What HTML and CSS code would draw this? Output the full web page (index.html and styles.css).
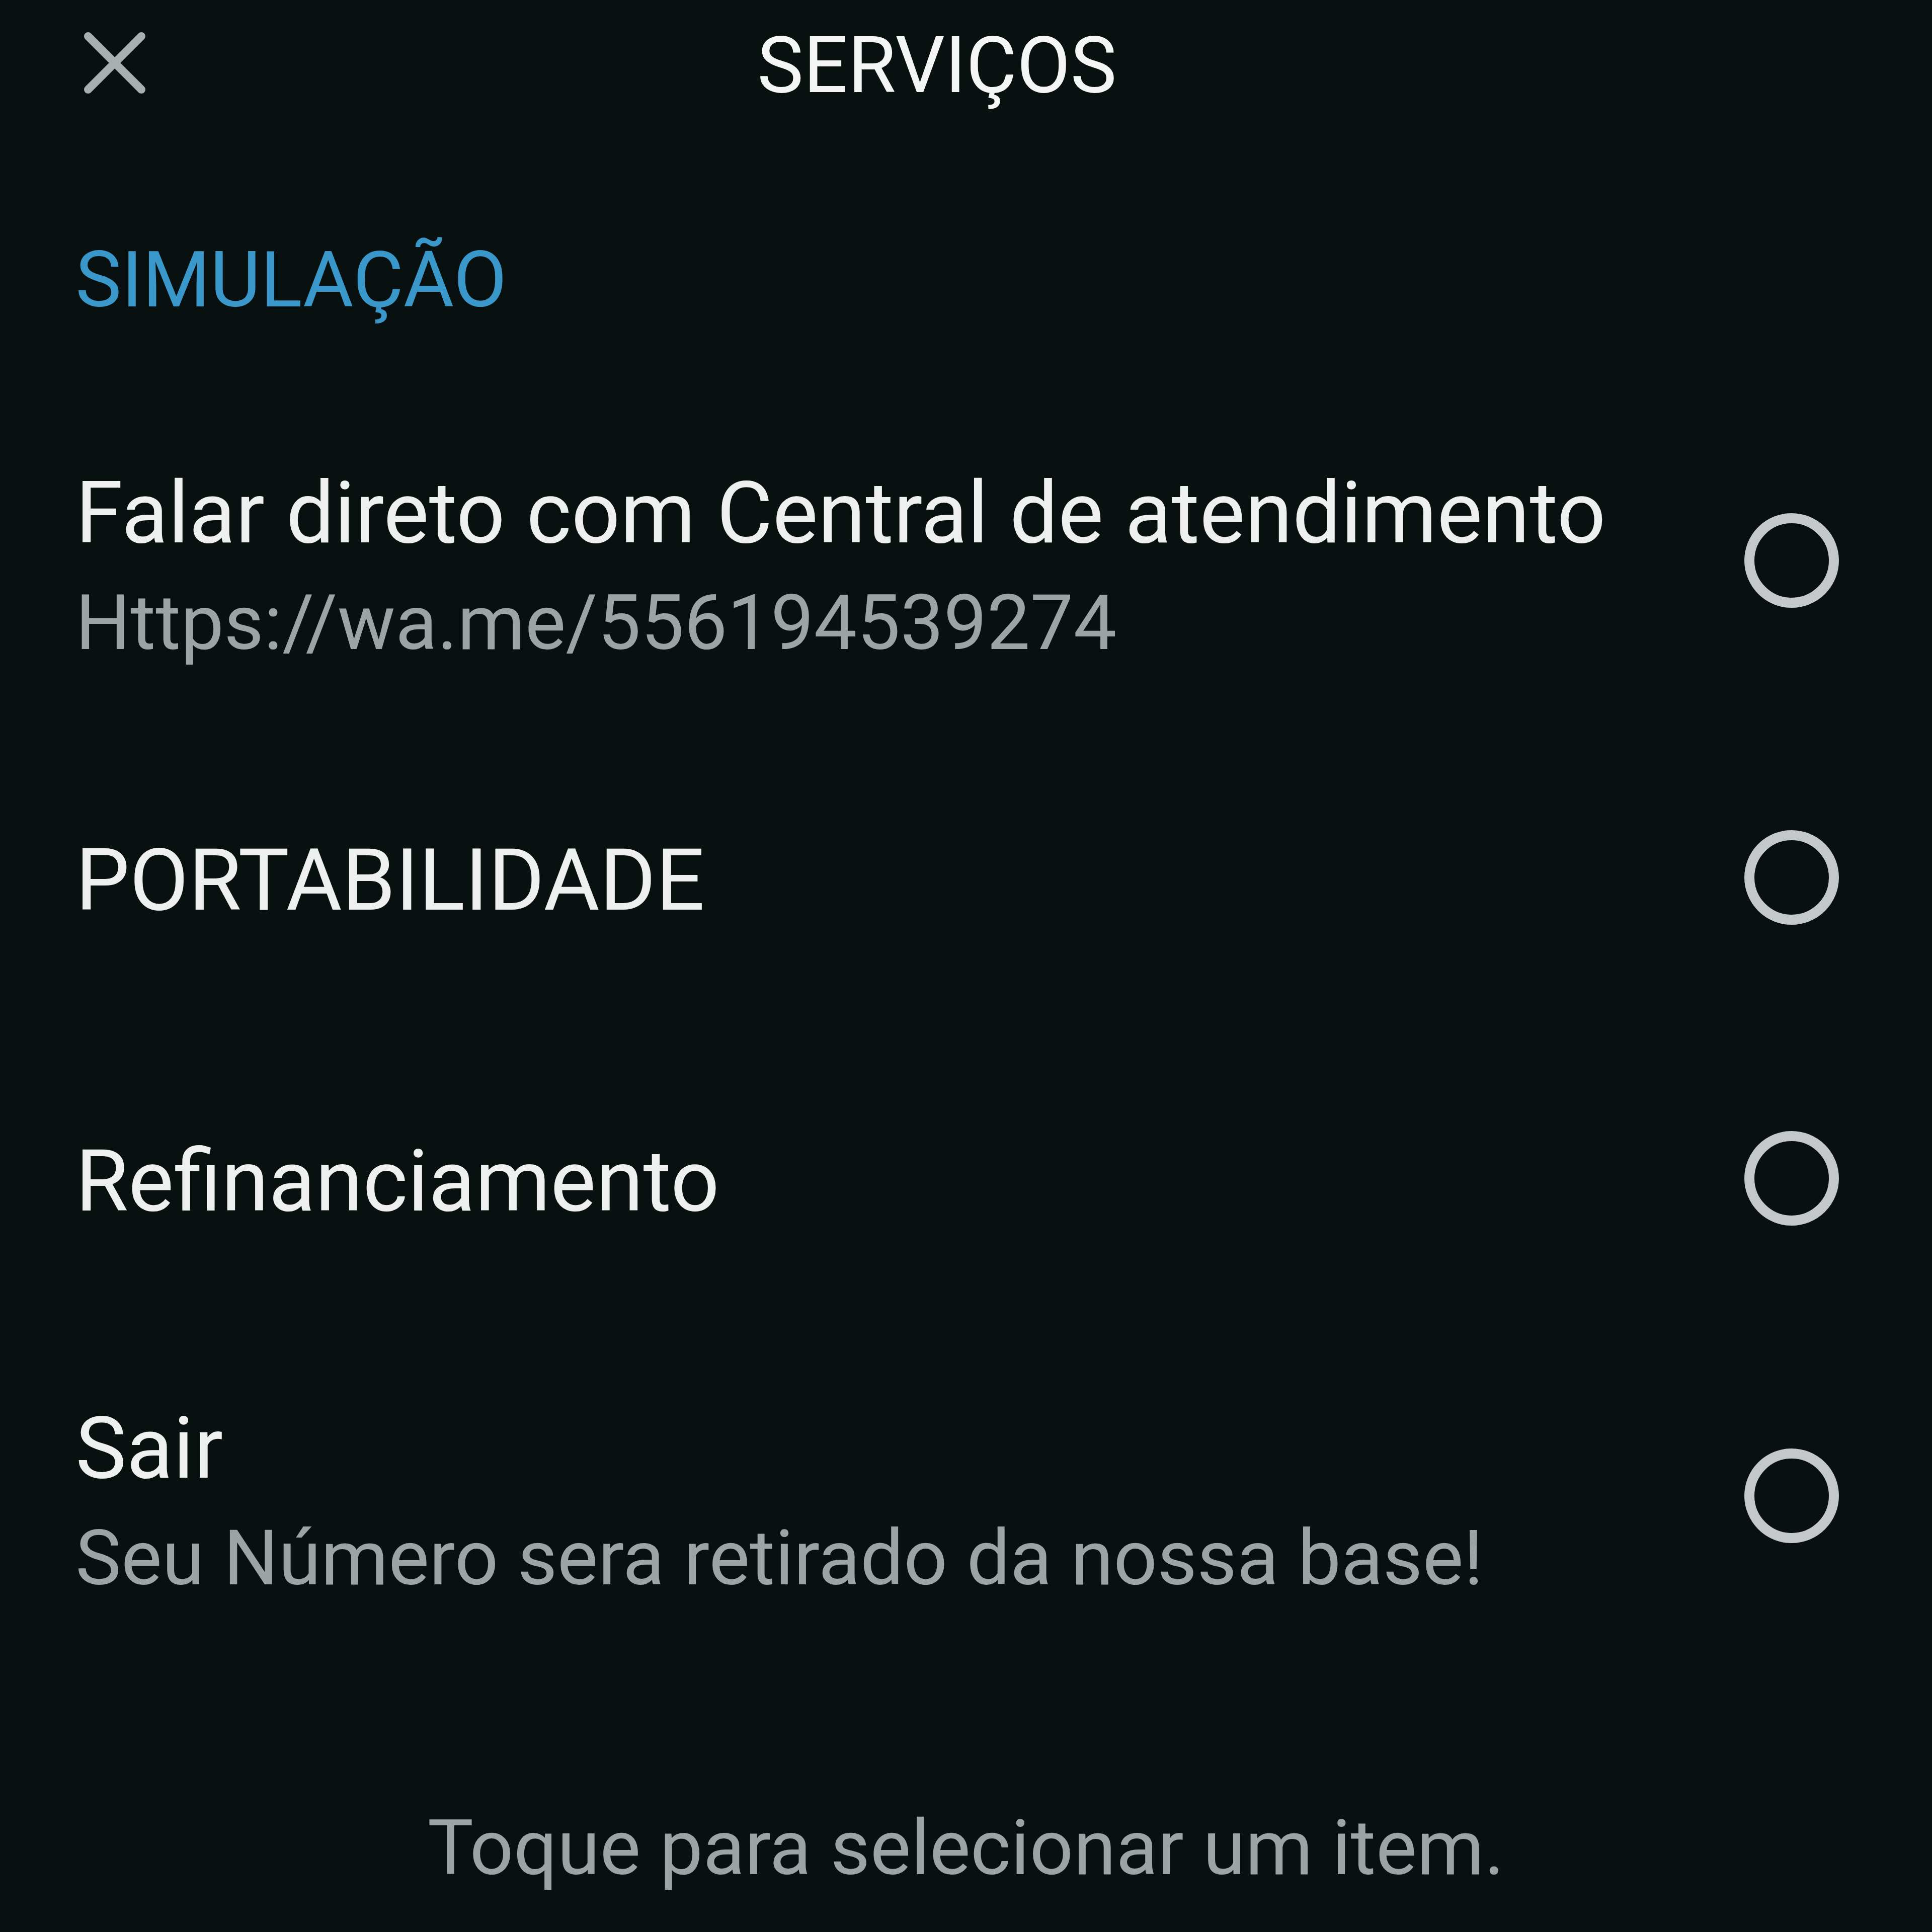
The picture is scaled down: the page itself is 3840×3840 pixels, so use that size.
FILE: index.html
```html
<!DOCTYPE html>
<html>
  <head>
    <meta charset="UTF-8">
    <title>Serviços</title>
    <link rel="stylesheet" href="styles.css">
  </head>
<body>
	<div class="screen">
		<div class="topbar">
			<svg class="close" viewBox="0 0 122 122" width="122" height="122">
				<path d="M8 8 L114 114 M114 8 L8 114" stroke="#a9aeae" stroke-width="16" stroke-linecap="round" fill="none"/>
			</svg>
			<div class="title">SERVIÇOS</div>
		</div>

		<div class="section">SIMULAÇÃO</div>

		<ul class="options">
			<li class="option double">
				<div class="text">
					<div class="name">Falar direto com Central de atendimento</div>
					<div class="desc">Https://wa.me/556194539274</div>
				</div>
				<span class="radio"></span>
			</li>
			<li class="option">
				<div class="text">
					<div class="name">PORTABILIDADE</div>
				</div>
				<span class="radio"></span>
			</li>
			<li class="option">
				<div class="text">
					<div class="name">Refinanciamento</div>
				</div>
				<span class="radio"></span>
			</li>
			<li class="option double">
				<div class="text">
					<div class="name">Sair</div>
					<div class="desc">Seu Número sera retirado da nossa base!</div>
				</div>
				<span class="radio"></span>
			</li>
		</ul>

		<p class="hint">Toque para selecionar um item.</p>
	</div>
</body>
</html>
```

FILE: styles.css
```css
html,body{
	margin:0;
	padding:0;
	background:#091010;
}
.screen{
	width:3840px;
	height:3840px;
	box-sizing:border-box;
	font-family:Roboto,"Noto Sans",sans-serif;
	color:#eef0f0;
	background:#091010;
}
.topbar{
	height:250px;
	display:flex;
	align-items:center;
	padding-left:167px;
}
.close{
	display:block;
	flex:none;
}
.title{
	margin-left:1216px;
	margin-top:10px;
	font-size:155px;
	line-height:183px;
	color:#f4f6f6;
}
.section{
	margin-top:215px;
	padding-left:150px;
	font-size:154px;
	line-height:183px;
	color:#3a97c9;
}
.options{
	list-style:none;
	margin:134px 0 0 0;
	padding:0;
}
.option{
	height:598px;
	display:flex;
	align-items:center;
	justify-content:space-between;
	padding:0 185px 0 150px;
}
.option.double{
	height:663px;
}
.option .text{
	margin-top:12px;
}
.option.double .text{
	margin-top:48px;
}
.name{
	font-size:170.5px;
	line-height:200px;
	white-space:nowrap;
}
.desc{
	font-size:153px;
	line-height:236px;
	color:#9ea3a5;
	white-space:nowrap;
}
.radio{
	flex:none;
	width:188px;
	height:188px;
	box-sizing:border-box;
	border:20px solid #c5c8c8;
	border-radius:50%;
}
.hint{
	margin:278px 0 0 0;
	text-align:center;
	font-size:153px;
	line-height:182px;
	color:#9ea3a5;
}
```
